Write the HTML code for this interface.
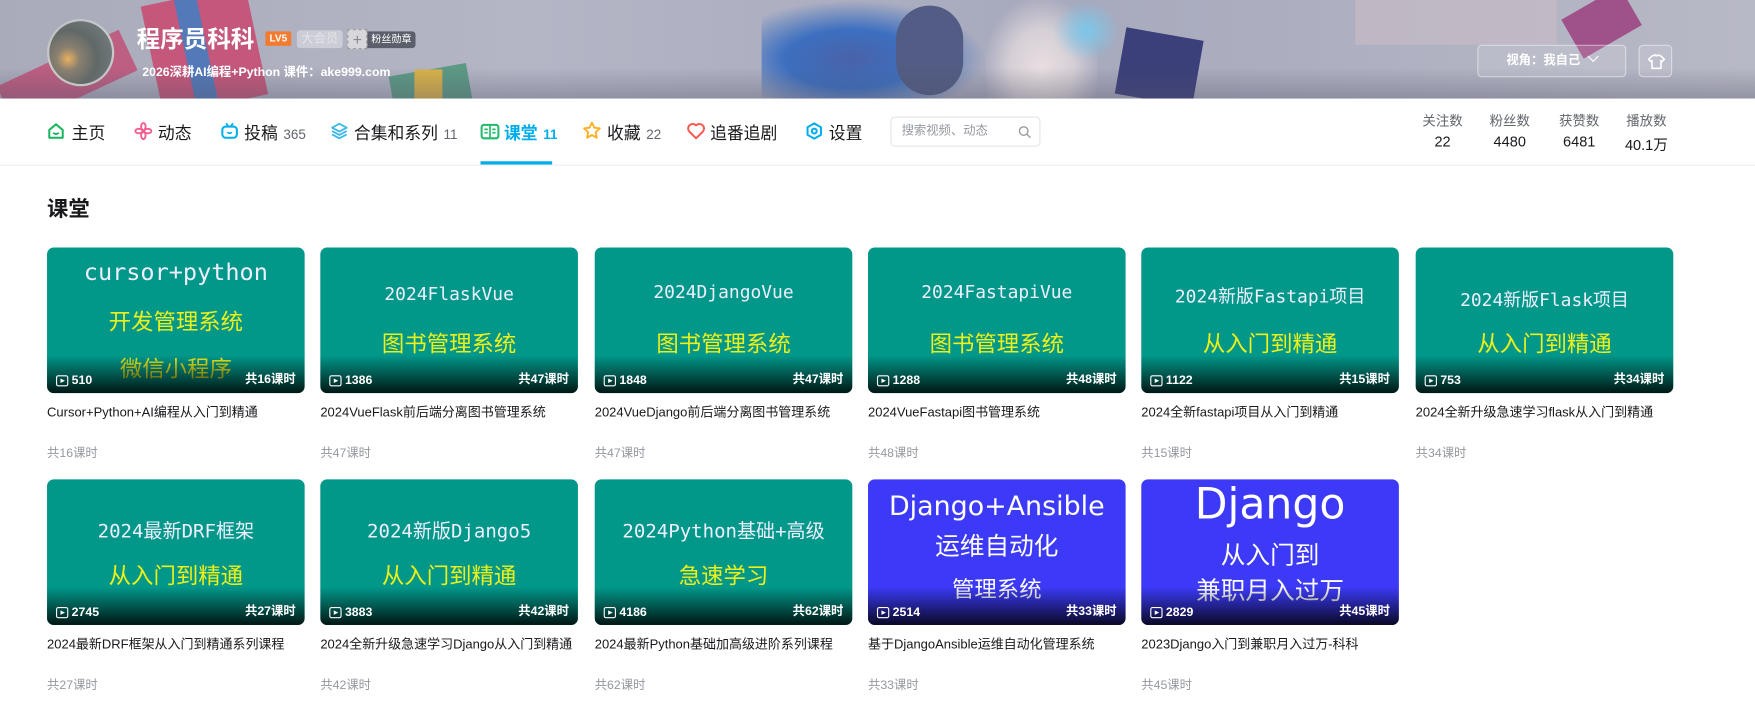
<!DOCTYPE html>
<html><head><meta charset="utf-8"><style>
*{margin:0;padding:0;box-sizing:border-box}
html,body{width:1755px;height:721px;overflow:hidden;background:#fff}
body{font-family:"Liberation Sans","Noto Sans CJK SC",sans-serif;color:#18191c}
#w{position:absolute;left:0;top:0;width:1567px;height:644px;transform:scale(1.12);transform-origin:0 0}
.ab{position:absolute}
.banner{left:0;top:0;width:1567px;height:88px;overflow:hidden;background:linear-gradient(90deg,#a9abbb 0%,#b4b6c6 30%,#a7a9bd 60%,#b8b9c6 100%)}
.nav span.t{position:absolute;top:108px;font-size:15px;color:#18191c;white-space:nowrap}
.nav span.n{font-size:12px;color:#61666d;margin-left:5px}
.card{position:absolute;width:230px;height:130px;border-radius:6px;overflow:hidden;background:#01988a;color:#fff;text-align:center}
.card.b{background:#3c3af7}
.card .l1{position:absolute;left:0;right:0;color:#eef;font-family:"DejaVu Sans Mono","Noto Sans CJK SC",monospace}
.card .y{position:absolute;left:0;right:0;color:#eef01a;font-family:"Noto Sans CJK SC",sans-serif}
.card .sh{position:absolute;left:0;right:0;bottom:0;height:34px;background:linear-gradient(rgba(0,0,0,0),rgba(0,0,0,.85))}
.card .pv{position:absolute;left:8px;bottom:5px;font-size:11px;font-weight:bold;display:flex;align-items:center;gap:3px}
.card .pv i{display:inline-block;width:11px;height:10px;border:1.3px solid #fff;border-radius:2px;position:relative}
.card .pv i:after{content:"";position:absolute;left:3px;top:1.5px;border-left:4px solid #fff;border-top:2.5px solid transparent;border-bottom:2.5px solid transparent}
.card .cn{position:absolute;right:8px;bottom:5px;font-size:11px;font-weight:bold}
.tt{position:absolute;font-size:11.6px;color:#18191c;white-space:nowrap}
.mt{position:absolute;font-size:11px;color:#9499a0}
</style></head><body><div id="w">
<div class="ab banner">
 <div class="ab" style="left:0;top:50px;width:120px;height:40px;background:#c43d6a;transform:rotate(-25deg);opacity:.7"></div>
 <div class="ab" style="left:135px;top:-5px;width:95px;height:100px;background:#c8486f;transform:rotate(-12deg);opacity:.85"></div>
 <div class="ab" style="left:165px;top:-5px;width:20px;height:100px;background:#3f7fc4;transform:rotate(-12deg);opacity:.85"></div>
 <div class="ab" style="left:350px;top:62px;width:70px;height:40px;background:#5c9a85;transform:rotate(-10deg)"></div>
 <div class="ab" style="left:370px;top:62px;width:25px;height:30px;background:#d9b24a"></div>
 <div class="ab" style="left:680px;top:0;width:200px;height:88px;background:radial-gradient(ellipse at 40% 60%,#4a62a8 0%,#3c6fc0 35%,rgba(90,130,200,0) 70%)"></div>
 <div class="ab" style="left:800px;top:5px;width:60px;height:80px;border-radius:30px;background:#525c84"></div>
 <div class="ab" style="left:880px;top:0;width:100px;height:88px;background:radial-gradient(ellipse at 50% 70%,#e8dfe0 0%,#d6cfd6 40%,rgba(200,200,210,0) 75%)"></div>
 <div class="ab" style="left:940px;top:0;width:60px;height:55px;background:radial-gradient(#7bc7ea,rgba(120,190,230,0) 70%)"></div>
 <div class="ab" style="left:1000px;top:30px;width:70px;height:60px;background:#3b3f7a;transform:rotate(10deg)"></div>
 <div class="ab" style="left:1210px;top:0;width:180px;height:40px;background:#c9bcc6;opacity:.6"></div>
 <div class="ab" style="left:1400px;top:0;width:60px;height:40px;background:#9a3a7a;transform:rotate(-30deg);opacity:.8"></div>
 <div class="ab" style="left:0;top:60px;width:1567px;height:28px;background:linear-gradient(rgba(80,80,100,0),rgba(80,80,100,.35))"></div>
 <div class="ab" style="left:42px;top:17px;width:60px;height:60px;border-radius:50%;border:2px solid rgba(255,255,255,.6);background:radial-gradient(circle at 30% 60%,#e8b060 0,#8a8070 20%,#606868 50%,#7c8488 100%)"></div>
 <div class="ab" style="left:122px;top:19px;font-size:21px;font-weight:bold;color:#fff">程序员科科</div>
 <div class="ab" style="left:237px;top:28px;width:23px;height:13px;background:#f27b30;color:#fff;font-size:9px;font-weight:bold;line-height:13px;text-align:center;border-radius:1px">LV5</div>
 <div class="ab" style="left:265px;top:27px;width:41px;height:16px;background:rgba(255,255,255,.35);color:#e4e4e8;font-size:11px;line-height:16px;text-align:center;border-radius:3px">大会员</div>
 <div class="ab" style="left:310px;top:26px;width:18px;height:18px;background:#d8d8dc;border:1px dashed #999;color:#888;font-size:14px;line-height:16px;text-align:center">+</div>
 <div class="ab" style="left:328px;top:28px;width:43px;height:15px;background:#5b5f6b;color:#fff;font-size:9px;line-height:15px;text-align:center;border-radius:0 3px 3px 0">粉丝勋章</div>
 <div class="ab" style="left:127px;top:56px;font-size:11px;color:#fff;font-weight:bold;white-space:nowrap">2026深耕AI编程+Python 课件：ake999.com</div>
 <div class="ab" style="left:1319px;top:40px;width:133px;height:29px;border:1px solid rgba(255,255,255,.45);border-radius:4px;background:rgba(255,255,255,.12);color:#fff;font-size:11px;font-weight:bold;line-height:27px;text-align:center">视角：我自己 <span style="display:inline-block;width:7px;height:7px;border-right:1.3px solid #fff;border-bottom:1.3px solid #fff;transform:rotate(45deg);margin:0 0 3px 5px"></span></div>
 <div class="ab" style="left:1463px;top:40px;width:30px;height:29px;border:1px solid rgba(255,255,255,.45);border-radius:4px;background:rgba(255,255,255,.12)"><svg width="30" height="29" viewBox="0 0 30 29"><path d="M11 9 L14 8 Q15 10 16 8 L19 9 L22 12 L20 14 L19 13 L19 20 L11 20 L11 13 L10 14 L8 12 Z" fill="none" stroke="#fff" stroke-width="1.4" stroke-linejoin="round"/></svg></div>
</div>
<div class="nav">
 <svg class="ab" style="left:42px;top:109px" width="16" height="16" viewBox="0 0 16 16"><path d="M2 7 L8 2 L14 7 L14 14 L2 14 Z" fill="none" stroke="#19b55f" stroke-width="1.8" stroke-linejoin="round"/><path d="M5.5 9.5 Q8 12 10.5 9.5" fill="none" stroke="#19b55f" stroke-width="1.6"/></svg>
 <span class="t" style="left:64px">主页</span>
 <svg class="ab" style="left:120px;top:109px" width="16" height="16" viewBox="0 0 16 16"><g fill="none" stroke="#f25d8e" stroke-width="1.7"><ellipse cx="8" cy="4" rx="2" ry="3.2"/><ellipse cx="8" cy="12" rx="2" ry="3.2"/><ellipse cx="4" cy="8" rx="3.2" ry="2"/><ellipse cx="12" cy="8" rx="3.2" ry="2"/></g></svg>
 <span class="t" style="left:141px">动态</span>
 <svg class="ab" style="left:197px;top:108px" width="16" height="17" viewBox="0 0 16 17"><path d="M5 2 L7 5 M11 2 L9 5" stroke="#00aeec" stroke-width="1.6"/><rect x="1.5" y="5" width="13" height="10" rx="3" fill="none" stroke="#00aeec" stroke-width="1.8"/><path d="M6 10 Q8 12 10 10" stroke="#00aeec" stroke-width="1.5" fill="none"/></svg>
 <span class="t" style="left:218px">投稿<span class="n">365</span></span>
 <svg class="ab" style="left:295px;top:109px" width="16" height="16" viewBox="0 0 16 16"><g fill="none" stroke="#3bb8e8" stroke-width="1.6" stroke-linejoin="round"><path d="M8 1.5 L14.5 5 L8 8.5 L1.5 5 Z"/><path d="M1.5 8 L8 11.5 L14.5 8"/><path d="M1.5 11 L8 14.5 L14.5 11"/></g></svg>
 <span class="t" style="left:316px">合集和系列<span class="n">11</span></span>
 <svg class="ab" style="left:429px;top:110px" width="17" height="15" viewBox="0 0 17 15"><rect x="1" y="1.5" width="15" height="12" rx="2" fill="none" stroke="#1fba6a" stroke-width="1.8"/><path d="M8.5 1.5 V13.5 M3.5 5.5 H6.5 M3.5 8.5 H6.5 M10.5 5.5 H13.5 M10.5 8.5 H13.5" stroke="#1fba6a" stroke-width="1.5"/></svg>
 <span class="t" style="left:450px;color:#00aeec;font-weight:bold">课堂<span class="n" style="color:#00aeec;font-weight:bold">11</span></span>
 <div class="ab" style="left:429px;top:144px;width:64px;height:3px;background:#00aeec"></div>
 <svg class="ab" style="left:520px;top:108px" width="17" height="17" viewBox="0 0 17 17"><path d="M8.5 1.5 L10.6 6 L15.5 6.6 L11.9 10 L12.8 15 L8.5 12.6 L4.2 15 L5.1 10 L1.5 6.6 L6.4 6 Z" fill="none" stroke="#ffb027" stroke-width="1.7" stroke-linejoin="round"/></svg>
 <span class="t" style="left:542px">收藏<span class="n">22</span></span>
 <svg class="ab" style="left:613px;top:109px" width="17" height="16" viewBox="0 0 17 16"><path d="M8.5 14.5 L2.5 8.5 A3.6 3.6 0 0 1 8.5 3 A3.6 3.6 0 0 1 14.5 8.5 Z" fill="none" stroke="#f85a54" stroke-width="1.8" stroke-linejoin="round"/></svg>
 <span class="t" style="left:634px">追番追剧</span>
 <svg class="ab" style="left:719px;top:109px" width="16" height="16" viewBox="0 0 16 16"><path d="M8 1.2 L14 4.6 L14 11.4 L8 14.8 L2 11.4 L2 4.6 Z" fill="none" stroke="#00aeec" stroke-width="1.8" stroke-linejoin="round"/><circle cx="8" cy="8" r="2.2" fill="none" stroke="#00aeec" stroke-width="1.8"/></svg>
 <span class="t" style="left:740px">设置</span>
 <div class="ab" style="left:795px;top:104px;width:134px;height:27px;border:1px solid #e3e5e7;border-radius:4px;background:#fff;font-size:11px;color:#9499a0;line-height:25px;padding-left:9px">搜索视频、动态
  <svg class="ab" style="right:7px;top:7px" width="12" height="12" viewBox="0 0 12 12"><circle cx="5" cy="5" r="3.8" fill="none" stroke="#9499a0" stroke-width="1.2"/><path d="M8 8 L11 11" stroke="#9499a0" stroke-width="1.2"/></svg></div>
 <div class="ab" style="left:1262px;top:99px;width:240px;font-size:12px;color:#61666d">
  <div class="ab" style="left:0;width:52px;text-align:center">关注数</div><div class="ab" style="left:60px;width:52px;text-align:center">粉丝数</div><div class="ab" style="left:122px;width:52px;text-align:center">获赞数</div><div class="ab" style="left:182px;width:52px;text-align:center">播放数</div>
  <div class="ab" style="left:0;top:20px;width:52px;text-align:center;color:#18191c;font-size:13px">22</div><div class="ab" style="left:60px;top:20px;width:52px;text-align:center;color:#18191c;font-size:13px">4480</div><div class="ab" style="left:122px;top:20px;width:52px;text-align:center;color:#18191c;font-size:13px">6481</div><div class="ab" style="left:182px;top:20px;width:52px;text-align:center;color:#18191c;font-size:13px">40.1万</div>
 </div>
</div>
<div class="ab" style="left:0;top:147px;width:1567px;height:1px;background:#eceef0"></div>
<div class="ab" style="left:42px;top:172px;font-size:19px;font-weight:bold">课堂</div>

<div class="card" style="left:42px;top:221px"><div class="l1" style="top:10px;font-size:21px">cursor+python</div><div class="y" style="top:50px;font-size:20px">开发管理系统</div><div class="y" style="top:92px;font-size:20px">微信小程序</div><div class="sh"></div><div class="pv"><i></i>510</div><div class="cn">共16课时</div></div>
<div class="tt" style="left:42px;top:360px">Cursor+Python+AI编程从入门到精通</div><div class="mt" style="left:42px;top:396px">共16课时</div>

<div class="card" style="left:286px;top:221px"><div class="l1" style="top:32px;font-size:16px">2024FlaskVue</div><div class="y" style="top:70px;font-size:20px">图书管理系统</div><div class="sh"></div><div class="pv"><i></i>1386</div><div class="cn">共47课时</div></div>
<div class="tt" style="left:286px;top:360px">2024VueFlask前后端分离图书管理系统</div><div class="mt" style="left:286px;top:396px">共47课时</div>

<div class="card" style="left:531px;top:221px"><div class="l1" style="top:30px;font-size:16px">2024DjangoVue</div><div class="y" style="top:70px;font-size:20px">图书管理系统</div><div class="sh"></div><div class="pv"><i></i>1848</div><div class="cn">共47课时</div></div>
<div class="tt" style="left:531px;top:360px">2024VueDjango前后端分离图书管理系统</div><div class="mt" style="left:531px;top:396px">共47课时</div>

<div class="card" style="left:775px;top:221px"><div class="l1" style="top:30px;font-size:16px">2024FastapiVue</div><div class="y" style="top:70px;font-size:20px">图书管理系统</div><div class="sh"></div><div class="pv"><i></i>1288</div><div class="cn">共48课时</div></div>
<div class="tt" style="left:775px;top:360px">2024VueFastapi图书管理系统</div><div class="mt" style="left:775px;top:396px">共48课时</div>

<div class="card" style="left:1019px;top:221px"><div class="l1" style="top:30px;font-size:16px">2024新版Fastapi项目</div><div class="y" style="top:70px;font-size:20px">从入门到精通</div><div class="sh"></div><div class="pv"><i></i>1122</div><div class="cn">共15课时</div></div>
<div class="tt" style="left:1019px;top:360px">2024全新fastapi项目从入门到精通</div><div class="mt" style="left:1019px;top:396px">共15课时</div>

<div class="card" style="left:1264px;top:221px"><div class="l1" style="top:33px;font-size:16px">2024新版Flask项目</div><div class="y" style="top:70px;font-size:20px">从入门到精通</div><div class="sh"></div><div class="pv"><i></i>753</div><div class="cn">共34课时</div></div>
<div class="tt" style="left:1264px;top:360px">2024全新升级急速学习flask从入门到精通</div><div class="mt" style="left:1264px;top:396px">共34课时</div>

<div class="card" style="left:42px;top:428px"><div class="l1" style="top:32px;font-size:17px">2024最新DRF框架</div><div class="y" style="top:70px;font-size:20px">从入门到精通</div><div class="sh"></div><div class="pv"><i></i>2745</div><div class="cn">共27课时</div></div>
<div class="tt" style="left:42px;top:567px">2024最新DRF框架从入门到精通系列课程</div><div class="mt" style="left:42px;top:603px">共27课时</div>

<div class="card" style="left:286px;top:428px"><div class="l1" style="top:32px;font-size:17px">2024新版Django5</div><div class="y" style="top:70px;font-size:20px">从入门到精通</div><div class="sh"></div><div class="pv"><i></i>3883</div><div class="cn">共42课时</div></div>
<div class="tt" style="left:286px;top:567px">2024全新升级急速学习Django从入门到精通</div><div class="mt" style="left:286px;top:603px">共42课时</div>

<div class="card" style="left:531px;top:428px"><div class="l1" style="top:32px;font-size:17px">2024Python基础+高级</div><div class="y" style="top:70px;font-size:20px">急速学习</div><div class="sh"></div><div class="pv"><i></i>4186</div><div class="cn">共62课时</div></div>
<div class="tt" style="left:531px;top:567px">2024最新Python基础加高级进阶系列课程</div><div class="mt" style="left:531px;top:603px">共62课时</div>

<div class="card b" style="left:775px;top:428px"><div class="l1" style="top:10px;font-size:24px;color:#fff;font-family:'DejaVu Sans','Noto Sans CJK SC',sans-serif">Django+Ansible</div><div class="l1" style="top:42px;font-size:22px;color:#fff;font-family:'Noto Sans CJK SC',sans-serif">运维自动化</div><div class="l1" style="top:82px;font-size:20px;color:#fff;font-family:'Noto Sans CJK SC',sans-serif">管理系统</div><div class="sh"></div><div class="pv"><i></i>2514</div><div class="cn">共33课时</div></div>
<div class="tt" style="left:775px;top:567px">基于DjangoAnsible运维自动化管理系统</div><div class="mt" style="left:775px;top:603px">共33课时</div>

<div class="card b" style="left:1019px;top:428px"><div class="l1" style="top:0px;font-size:38px;color:#fff;font-family:'DejaVu Sans','Noto Sans CJK SC',sans-serif">Django</div><div class="l1" style="top:50px;font-size:22px;color:#fff;font-family:'Noto Sans CJK SC',sans-serif">从入门到</div><div class="l1" style="top:82px;font-size:22px;color:#fff;font-family:'Noto Sans CJK SC',sans-serif">兼职月入过万</div><div class="sh"></div><div class="pv"><i></i>2829</div><div class="cn">共45课时</div></div>
<div class="tt" style="left:1019px;top:567px">2023Django入门到兼职月入过万-科科</div><div class="mt" style="left:1019px;top:603px">共45课时</div>
</div></body></html>
